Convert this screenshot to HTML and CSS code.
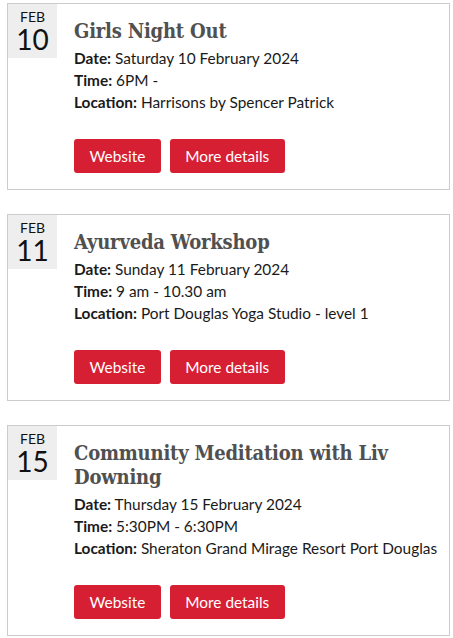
FILE: index.html
```html
<!DOCTYPE html>
<html lang="en">
<head>
    <meta charset="UTF-8">
    <meta name="viewport" content="width=device-width, initial-scale=1.0">
    <title>Events</title>
    <link rel="stylesheet" href="styles.css">
</head>
<body>
    <div class="event-list">
        <div class="event">
            <div class="event-date">
                <span class="event-month">FEB</span>
                <span class="event-day">10</span>
            </div>
            <div class="event-body">
                <h2 class="event-title">Girls Night Out</h2>
                <div class="event-detail"><strong>Date:</strong> Saturday 10 February 2024</div>
                <div class="event-detail"><strong>Time:</strong> 6PM -</div>
                <div class="event-detail"><strong>Location:</strong> Harrisons by Spencer Patrick</div>
                <div class="event-actions">
                    <a class="event-button" href="#">Website</a>
                    <a class="event-button" href="#">More details</a>
                </div>
            </div>
        </div>

        <div class="event">
            <div class="event-date">
                <span class="event-month">FEB</span>
                <span class="event-day">11</span>
            </div>
            <div class="event-body">
                <h2 class="event-title">Ayurveda Workshop</h2>
                <div class="event-detail"><strong>Date:</strong> Sunday 11 February 2024</div>
                <div class="event-detail"><strong>Time:</strong> 9 am - 10.30 am</div>
                <div class="event-detail"><strong>Location:</strong> Port Douglas Yoga Studio - level 1</div>
                <div class="event-actions">
                    <a class="event-button" href="#">Website</a>
                    <a class="event-button" href="#">More details</a>
                </div>
            </div>
        </div>

        <div class="event">
            <div class="event-date">
                <span class="event-month">FEB</span>
                <span class="event-day">15</span>
            </div>
            <div class="event-body">
                <h2 class="event-title">Community Meditation with Liv Downing</h2>
                <div class="event-detail"><strong>Date:</strong> Thursday 15 February 2024</div>
                <div class="event-detail"><strong>Time:</strong> 5:30PM - 6:30PM</div>
                <div class="event-detail"><strong>Location:</strong> Sheraton Grand Mirage Resort Port Douglas</div>
                <div class="event-actions">
                    <a class="event-button" href="#">Website</a>
                    <a class="event-button" href="#">More details</a>
                </div>
            </div>
        </div>
    </div>
</body>
</html>
```

FILE: styles.css
```css
* {
    margin: 0;
    padding: 0;
    box-sizing: border-box;
}

body {
    font-family: Lato, 'Liberation Sans', sans-serif;
    font-size: 15.4px;
    color: #1a1a1a;
    background: #fff;
    padding: 3px 3px 0 7px;
}

.event {
    display: flex;
    align-items: flex-start;
    border: 1px solid #cccccc;
    margin-bottom: 24px;
}

.event-date {
    flex-shrink: 0;
    width: 49px;
    height: 54px;
    background: #eeeeee;
    text-align: center;
    color: #111;
    padding-top: 4px;
}

.event-month {
    display: block;
    font-size: 14px;
    line-height: 17px;
}

.event-day {
    display: block;
    font-size: 28px;
    line-height: 30px;
    margin-top: -1px;
}

.event-body {
    flex: 1;
    padding: 15px 6px 16px 17px;
}

.event-title {
    font-family: 'DejaVu Serif', serif;
    font-stretch: condensed;
    font-size: 20px;
    line-height: 24px;
    font-weight: bold;
    letter-spacing: -0.2px;
    color: #505050;
    margin-bottom: 4px;
}

.event-detail {
    line-height: 22px;
}

.event-detail strong {
    font-weight: bold;
}

.event-actions {
    display: flex;
    gap: 9px;
    margin-top: 26px;
}

.event-button {
    display: inline-block;
    background: #d71f34;
    color: #fff;
    text-decoration: none;
    padding: 7px 15.5px;
    line-height: 20px;
    border-radius: 3px;
}
```
